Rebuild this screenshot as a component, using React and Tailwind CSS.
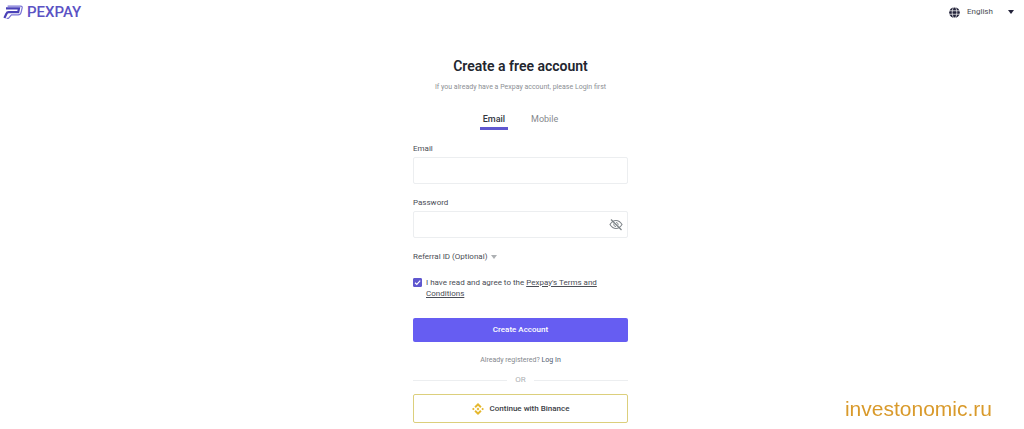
import React, { useState } from "react";

const TABS = ["Email", "Mobile"];

function Logo() {
  return (
    <a href="#" aria-label="Pexpay home" className="flex items-center gap-1 text-[#5b52c4]">
      <svg width="20" height="14" viewBox="0 0 20 14" fill="none" aria-hidden="true">
        <path d="M4.6 1.2H17.6Q19.6 1.2 19.1 3.2L18.1 7.4Q17.5 9.8 15.2 9.8H8.4L5.4 13.4H3.6" stroke="#7b74d6" strokeWidth="1.2" />
        <path d="M3 3.4H16L15.2 7.2H5.6Q4 7.2 3.4 8.8L1.4 13" stroke="#4a41b8" strokeWidth="2.2" />
      </svg>
      <span className="text-[15px] leading-5 font-medium">PEXPAY</span>
    </a>
  );
}

function GlobeIcon() {
  return (
    <svg width="11" height="11" viewBox="0 0 12 12" aria-hidden="true">
      <circle cx="6" cy="6" r="5.8" fill="#23233a" />
      <g fill="none" stroke="#fff" strokeWidth="0.8">
        <ellipse cx="6" cy="6" rx="2.5" ry="6" />
        <path d="M0 4.1H12M0 7.9H12" />
      </g>
    </svg>
  );
}

function BinanceIcon() {
  return (
    <svg width="12" height="12" viewBox="0 0 24 24" fill="#e5b72c" aria-hidden="true">
      <path d="M12 0L19.2 7.2L16.5 9.9L12 5.4L7.5 9.9L4.8 7.2Z" />
      <path d="M12 24L19.2 16.8L16.5 14.1L12 18.6L7.5 14.1L4.8 16.8Z" />
      <path d="M2.7 9.3L5.4 12L2.7 14.7L0 12ZM21.3 9.3L24 12L21.3 14.7L18.6 12ZM12 9.2L14.8 12L12 14.8L9.2 12Z" />
    </svg>
  );
}

function EyeOffIcon() {
  return (
    <svg width="14" height="12" viewBox="0 0 28 24" fill="none" stroke="#7d8388" strokeWidth="2.2" aria-hidden="true">
      <path d="M2 11Q7 3 14 3T26 11Q21 19 14 19T2 11Z" />
      <path d="M9.4 9Q8.6 14.6 14 15.4M14 6.8Q19 7.4 18.4 12.6" strokeWidth="1.8" />
      <path d="M4 1L25 22" strokeWidth="2.4" />
    </svg>
  );
}

function Header() {
  return (
    <header className="flex h-6 items-center justify-between pr-2.5 pl-[3px]">
      <Logo />
      <div className="flex items-center gap-[7px]">
        <GlobeIcon />
        <div className="relative flex items-center">
          <select aria-label="Language" className="w-[47px] appearance-none bg-transparent text-[8px] leading-3 text-[#4a4d55]">
            <option>English</option>
          </select>
          <svg className="pointer-events-none absolute right-0" width="6" height="4" viewBox="0 0 6 4" fill="#23233a" aria-hidden="true">
            <path d="M0 0H6L3 4Z" />
          </svg>
        </div>
      </div>
    </header>
  );
}

export default function App() {
  const [tab, setTab] = useState("Email");
  const [showPassword, setShowPassword] = useState(false);
  const [agreed, setAgreed] = useState(true);

  return (
    <div className="bg-white font-[Roboto,sans-serif] text-[8px] leading-3 text-[#4a4d55]">
      <Header />

      <main className="flex justify-center pt-8 pb-1.5 pl-[17px]">
        <form className="flex w-[215px] flex-col" onSubmit={e => e.preventDefault()}>
          <h1 className="text-center text-[14px] leading-5 font-semibold text-[#23262f]">Create a free account</h1>
          <p className="mt-[5px] text-center text-[7px] whitespace-nowrap text-[#8c8f94]">
            If you already have a Pexpay account, please Login first
          </p>

          <div className="mt-[19px] flex justify-center gap-5" role="tablist">
            {TABS.map(name => (
              <button
                key={name}
                type="button"
                role="tab"
                aria-selected={tab === name}
                onClick={() => setTab(name)}
                className={`border-b-3 px-[3px] pb-px text-[9px] leading-[14px] ${
                  tab === name ? "border-[#5f57cf] font-medium text-[#33363f]" : "border-transparent text-[#85888d]"
                }`}
              >
                {name}
              </button>
            ))}
          </div>

          <label htmlFor="email" className="mt-[13px]">Email</label>
          <input
            id="email"
            type="text"
            className="mt-0.5 h-[27px] rounded-xs border border-[#eceef0] px-2 outline-none"
          />

          <label htmlFor="password" className="mt-[13px]">Password</label>
          <div className="mt-0.5 flex h-[27px] items-center rounded-xs border border-[#eceef0] pr-1">
            <input
              id="password"
              type={showPassword ? "text" : "password"}
              className="min-w-0 flex-1 px-2 outline-none"
            />
            <button type="button" aria-label="Show password" onClick={() => setShowPassword(!showPassword)}>
              <EyeOffIcon />
            </button>
          </div>

          <button type="button" className="mt-[13px] flex items-center gap-1 self-start">
            Referral ID (Optional)
            <svg width="6" height="4" viewBox="0 0 6 4" fill="#adb0b3" aria-hidden="true">
              <path d="M0 0H6L3 4Z" />
            </svg>
          </button>

          <div className="mt-3.5 flex items-start gap-1 leading-[11px]">
            <span className="relative mt-px flex">
              <input
                id="terms"
                type="checkbox"
                checked={agreed}
                onChange={e => setAgreed(e.target.checked)}
                className="size-[9px] appearance-none rounded-[1px] border border-[#5f57cf] checked:bg-[#5f57cf]"
              />
              {agreed && (
                <svg className="pointer-events-none absolute inset-0" width="9" height="9" viewBox="0 0 9 9" fill="none" stroke="#fff" strokeWidth="1.2" aria-hidden="true">
                  <path d="M2 4.7L3.8 6.4L7.2 2.7" />
                </svg>
              )}
            </span>
            <label htmlFor="terms" className="w-44">
              I have read and agree to the <a href="#" className="underline">Pexpay's Terms and Conditions</a>
            </label>
          </div>

          <button type="submit" className="mt-[19px] h-6 rounded-xs bg-[#665df2] font-medium text-white">
            Create Account
          </button>

          <p className="mt-3 text-center text-[7px] text-[#85888d]">
            Already registered? <a href="#" className="text-[#4f5b70]">Log In</a>
          </p>

          <div className="mt-2 flex items-center gap-2 text-[#adb0b3]">
            <span className="h-px flex-1 bg-[#eceef0]" />
            OR
            <span className="h-px flex-1 bg-[#eceef0]" />
          </div>

          <button
            type="button"
            className="mt-2 flex h-[29px] items-center justify-center gap-1.5 rounded-xs border border-[#dccf7c] font-medium text-[#3b3e46]"
          >
            <BinanceIcon />
            Continue with Binance
          </button>
        </form>
      </main>

      <span className="fixed right-8 bottom-2 font-['Liberation_Sans',sans-serif] text-[21px] leading-6 text-[#d99a2b]">
        investonomic.ru
      </span>
    </div>
  );
}
